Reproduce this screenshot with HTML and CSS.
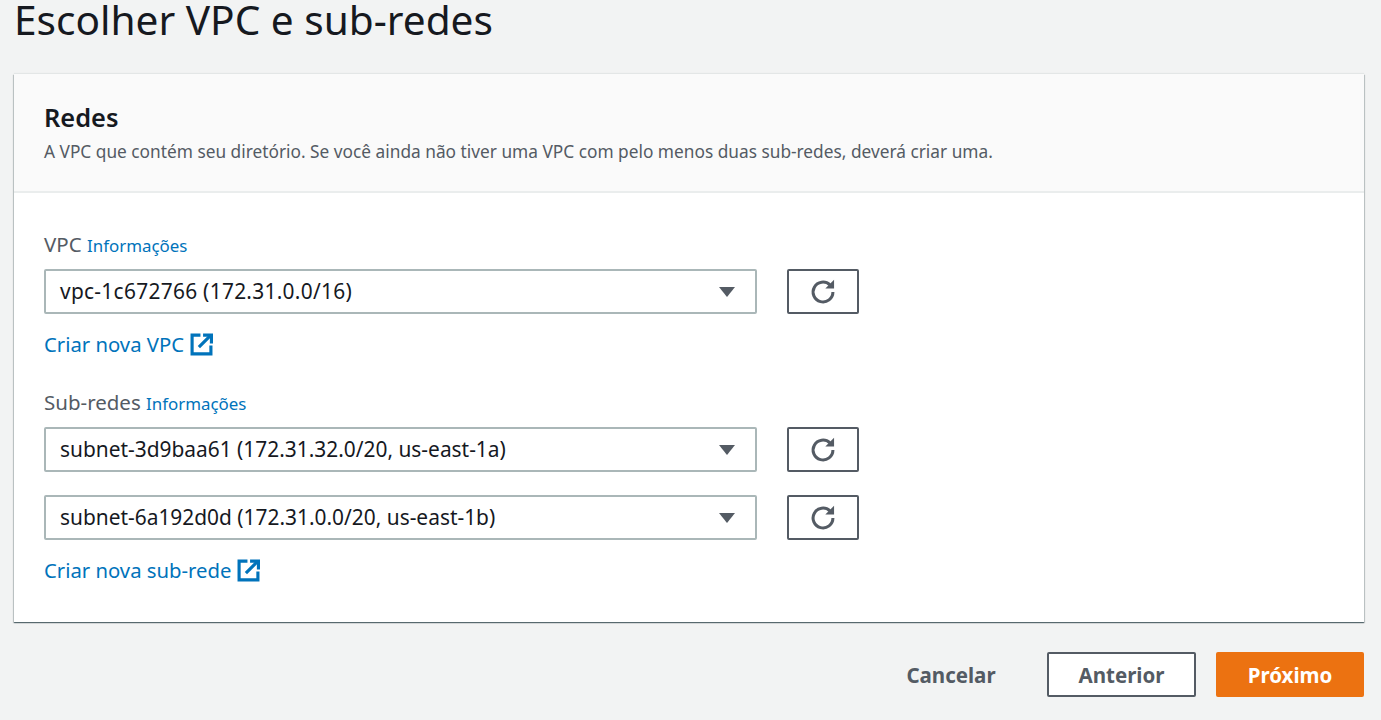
FILE: index.html
```html
<!DOCTYPE html>
<html lang="pt">
<head>
<meta charset="utf-8">
<title>Escolher VPC e sub-redes</title>
<link rel="stylesheet" href="styles.css">
</head>
<body>
<main class="page">
  <h1 class="title">Escolher VPC e sub-redes</h1>
  <section class="card">
    <header class="card-head">
      <h2 class="card-title">Redes</h2>
      <p class="card-desc">A VPC que contém seu diretório. Se você ainda não tiver uma VPC com pelo menos duas sub-redes, deverá criar uma.</p>
    </header>
    <div class="card-body">
      <div class="field">
        <div class="label">VPC <a class="info">Informações</a></div>
        <div class="row">
          <div class="select select-wide"><span>vpc-1c672766 (172.31.0.0/16)</span><svg class="caret" viewBox="0 0 16 10"><path d="M0 0h16L8 10z"/></svg></div>
          <button class="refresh"><svg viewBox="0 0 24 24"><path d="M20.5 12a8.5 8.5 0 1 1-2.6-6.1" /><path class="fill" d="M21.5 1.5v7.5h-7.5z"/></svg></button>
        </div>
        <a class="create">Criar nova VPC <svg class="ext" viewBox="0 0 22 22"><path d="M10 2H2v18h18v-8"/><path d="M8.5 13.5 19.5 2.5"/><path d="M12.5 2h8v8"/></svg></a>
      </div>
      <div class="field">
        <div class="label">Sub-redes <a class="info">Informações</a></div>
        <div class="row">
          <div class="select"><span>subnet-3d9baa61 (172.31.32.0/20, us-east-1a)</span><svg class="caret" viewBox="0 0 16 10"><path d="M0 0h16L8 10z"/></svg></div>
          <button class="refresh"><svg viewBox="0 0 24 24"><path d="M20.5 12a8.5 8.5 0 1 1-2.6-6.1" /><path class="fill" d="M21.5 1.5v7.5h-7.5z"/></svg></button>
        </div>
        <div class="row row-second">
          <div class="select"><span>subnet-6a192d0d (172.31.0.0/20, us-east-1b)</span><svg class="caret" viewBox="0 0 16 10"><path d="M0 0h16L8 10z"/></svg></div>
          <button class="refresh"><svg viewBox="0 0 24 24"><path d="M20.5 12a8.5 8.5 0 1 1-2.6-6.1" /><path class="fill" d="M21.5 1.5v7.5h-7.5z"/></svg></button>
        </div>
        <a class="create">Criar nova sub-rede <svg class="ext" viewBox="0 0 22 22"><path d="M10 2H2v18h18v-8"/><path d="M8.5 13.5 19.5 2.5"/><path d="M12.5 2h8v8"/></svg></a>
      </div>
    </div>
  </section>
  <footer class="actions">
    <button class="btn btn-link">Cancelar</button>
    <button class="btn btn-normal">Anterior</button>
    <button class="btn btn-primary">Próximo</button>
  </footer>
</main>
</body>
</html>
```
FILE: styles.css
```css
* { box-sizing: border-box; }
html, body { margin: 0; height: 100%; }
body {
  background: #f2f3f3;
  color: #16191f;
  font-family: "Noto Sans", "Open Sans", sans-serif;
  overflow: hidden;
}
.page { padding: 0 17px 0 14px; }
.title {
  margin: 0;
  height: 74px;
  font-size: 40.6px;
  line-height: 40px;
  font-weight: 400;
}
.card {
  background: #fff;
  box-shadow: 0 1px 1px 0 rgba(0,28,36,.5), 1px 1px 1px 0 rgba(0,28,36,.15), -1px 1px 1px 0 rgba(0,28,36,.15), 0 -1px 1px 0 rgba(0,28,36,.06);
  height: 548px;
}
.card-head {
  height: 119px;
  padding: 27px 30px 0;
  background: #fafafa;
  border-bottom: 2px solid #eaeded;
}
.card-title {
  margin: 0 0 7px;
  font-size: 25.4px;
  line-height: 32px;
  font-weight: 600;
}
.card-desc {
  margin: 0;
  font-size: 17.3px;
  line-height: 24px;
  color: #545b64;
}
.card-body { padding: 37px 30px 0; }
.field { margin-bottom: 30px; }
.label {
  font-size: 20.5px;
  line-height: 28px;
  color: #545b64;
  margin-bottom: 9px;
}
.info { font-size: 16.9px; color: #0073bb; }
.row { display: flex; gap: 30px; }
.row-second { margin-top: 23px; }
.select {
  width: 713px;
  height: 45px;
  border: 2px solid #aab7b8;
  border-radius: 2px;
  background: #fff;
  display: flex;
  align-items: center;
  justify-content: space-between;
  padding: 0 20px 0 14px;
  font-size: 20.9px;
  color: #16191f;
}
.select span { padding-bottom: 2px; }
.select-wide { letter-spacing: .29px; }
.caret { width: 16px; height: 10px; fill: #545b64; }
.refresh {
  width: 72px;
  height: 45px;
  border: 2px solid #545b64;
  border-radius: 2px;
  background: #fff;
  padding: 0;
  display: flex;
  align-items: center;
  justify-content: center;
}
.refresh svg { width: 28px; height: 28px; fill: none; stroke: #545b64; stroke-width: 2.6; }
.refresh .fill { fill: #545b64; stroke: none; }
.create {
  display: flex;
  align-items: center;
  gap: 6px;
  margin-top: 16px;
  font-size: 20.3px;
  line-height: 28px;
  color: #0073bb;
}
.ext { width: 23px; height: 23px; fill: none; stroke: #0073bb; stroke-width: 3; }
.actions {
  display: flex;
  justify-content: flex-end;
  align-items: center;
  gap: 20px;
  margin-top: 30px;
}
.btn {
  height: 45px;
  border-radius: 2px;
  font-family: inherit;
  font-size: 20.5px;
  font-weight: 700;
  padding: 0;
  color: #545b64;
}
.btn-link { width: 152px; border: 0; background: transparent; }
.btn-normal { width: 149px; border: 2px solid #545b64; background: #fff; }
.btn-primary { width: 148px; border: 0; background: #ec7211; color: #fff; }
```
